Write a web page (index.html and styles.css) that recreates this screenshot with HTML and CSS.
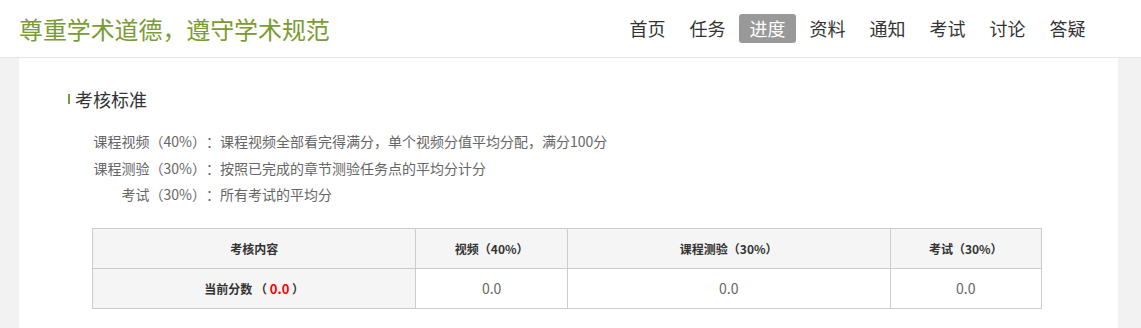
FILE: index.html
```html
<!DOCTYPE html>
<html lang="zh-CN">
<head>
    <meta charset="UTF-8">
    <meta name="viewport" content="width=device-width, initial-scale=1.0">
    <title>进度</title>
    <link rel="stylesheet" href="styles.css">
</head>
<body>
    <div class="top">
        <div class="slogan">尊重学术道德，遵守学术规范</div>
        <ul class="nav">
            <li><a href="#">首页</a></li>
            <li><a href="#">任务</a></li>
            <li><a href="#" class="active">进度</a></li>
            <li><a href="#">资料</a></li>
            <li><a href="#">通知</a></li>
            <li><a href="#">考试</a></li>
            <li><a href="#">讨论</a></li>
            <li><a href="#">答疑</a></li>
        </ul>
    </div>
    <div class="wrap">
        <div class="panel">
            <h2 class="title">考核标准</h2>
            <div class="rules">
                <div class="rule"><span class="rule-name">课程视频（40%）</span><span>：课程视频全部看完得满分，单个视频分值平均分配，满分100分</span></div>
                <div class="rule"><span class="rule-name">课程测验（30%）</span><span>：按照已完成的章节测验任务点的平均分计分</span></div>
                <div class="rule"><span class="rule-name">考试（30%）</span><span>：所有考试的平均分</span></div>
            </div>
            <table class="score">
                <tr>
                    <th class="col-a">考核内容</th>
                    <th class="col-b">视频（40%）</th>
                    <th class="col-c">课程测验（30%）</th>
                    <th class="col-d">考试（30%）</th>
                </tr>
                <tr>
                    <th>当前分数 （ <span class="red">0.0</span> ）</th>
                    <td>0.0</td>
                    <td>0.0</td>
                    <td>0.0</td>
                </tr>
            </table>
        </div>
    </div>
</body>
</html>
```

FILE: styles.css
```css
body {
    margin: 0;
    font-family: "Microsoft YaHei", "Noto Sans CJK SC", sans-serif;
    background-color: #f2f2f2;
    color: #333;
}
.top {
    height: 57px;
    background-color: white;
    border-bottom: 1px solid #e6e6e6;
    display: flex;
    align-items: center;
    justify-content: space-between;
    padding: 0 45px 0 19px;
}
.slogan {
    font-size: 24px;
    color: #7b9c30;
    letter-spacing: -0.1px;
}
.nav {
    list-style: none;
    margin: 0;
    padding: 0;
    display: flex;
    gap: 3px;
}
.nav a {
    display: block;
    padding: 0 10.5px;
    height: 29px;
    line-height: 29px;
    font-size: 18px;
    color: #333;
    text-decoration: none;
    border-radius: 3px;
}
.nav a.active {
    background-color: #999;
    color: white;
}
.wrap {
    padding: 0 23px 0 19px;
}
.panel {
    background-color: white;
    padding: 29px 0 40px 73px;
    min-height: 260px;
}
.title {
    margin: 0 0 17px -24px;
    font-size: 18px;
    font-weight: normal;
    line-height: 24px;
    color: #333;
    display: flex;
    align-items: center;
}
.title::before {
    content: "";
    width: 2px;
    height: 10px;
    background-color: #7b9c30;
    margin-right: 5px;
}
.rules {
    font-size: 14px;
    color: #666;
    line-height: 26.5px;
    margin-bottom: 20px;
}
.rule {
    display: flex;
}
.rule-name {
    width: 114px;
    text-align: right;
}
.score {
    border-collapse: collapse;
    width: 950px;
    font-size: 12px;
}
.score th, .score td {
    border: 1px solid #ccc;
    height: 39px;
    text-align: center;
    padding: 0;
}
.score th {
    background-color: #f5f5f5;
    color: #333;
}
.score td {
    font-size: 14px;
    color: #666;
}
.col-a { width: 324px; }
.col-b { width: 151px; }
.col-c { width: 323px; }
.col-d { width: 151px; }
.red {
    color: #f00;
    font-size: 13px;
}
```
